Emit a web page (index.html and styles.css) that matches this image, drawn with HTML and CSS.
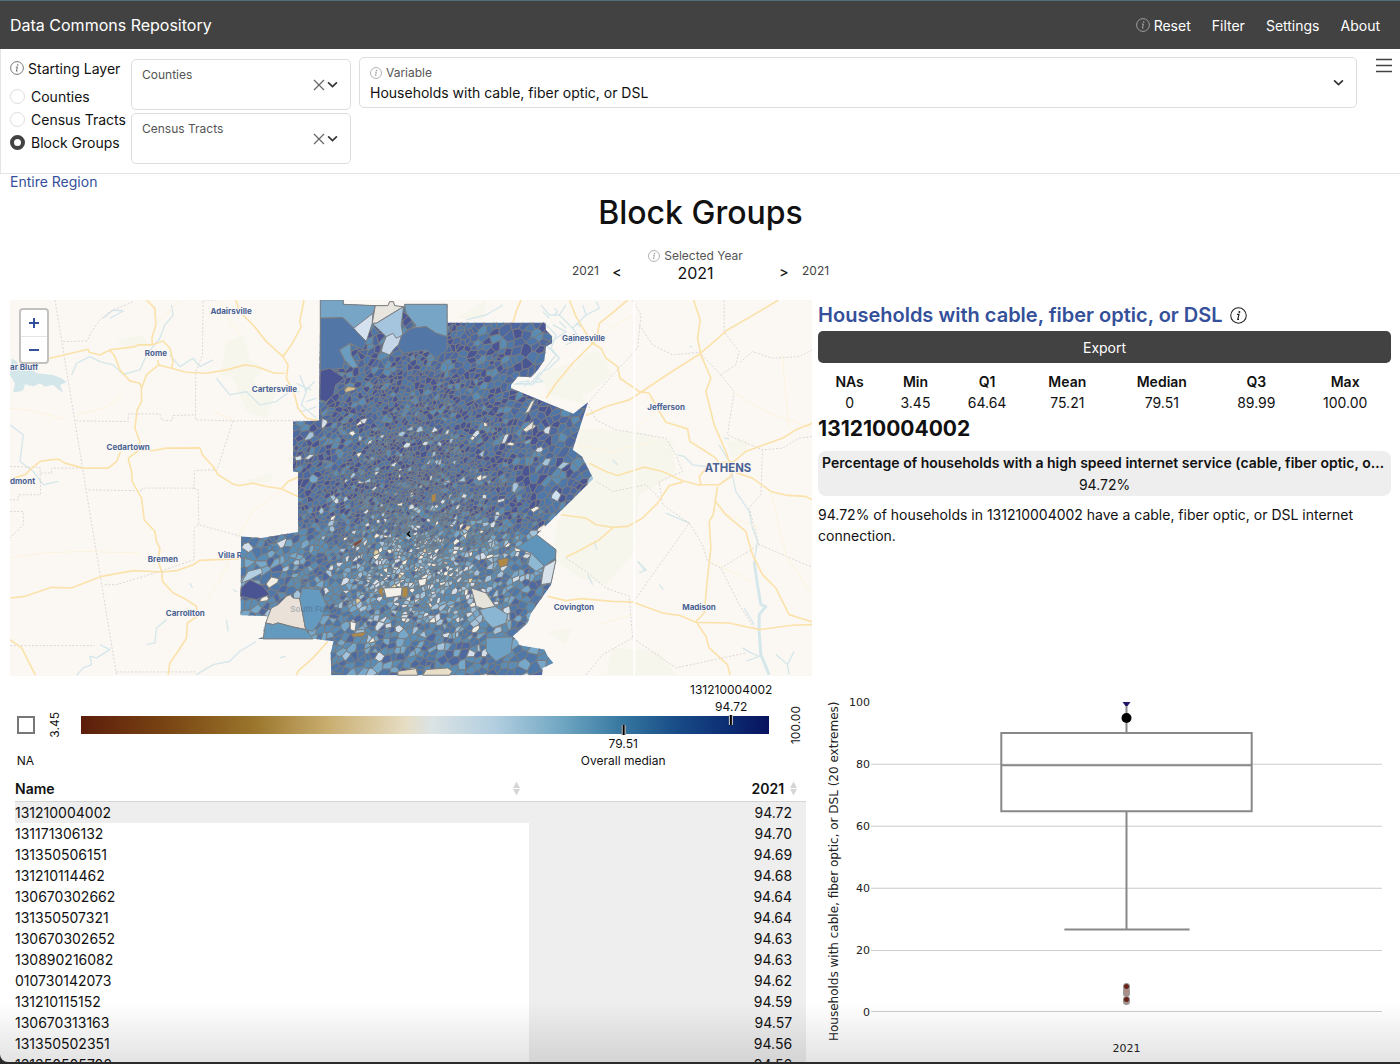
FILE: index.html
```html
<!DOCTYPE html>
<html lang="en">
<head>
<meta charset="utf-8">
<title>Data Commons Repository</title>
<link rel="stylesheet" href="styles.css">
</head>
<body>
<svg class="defs" width="0" height="0" aria-hidden="true">
  <symbol id="info" viewBox="0 0 16 16"><circle cx="8" cy="8" r="7.3" fill="none" stroke="currentColor"/><circle cx="8.8" cy="4.6" r=".95" fill="currentColor"/><path d="M6.6 6.9h1.9L7.3 11.6h1.2" fill="none" stroke="currentColor" stroke-width="1.1"/></symbol>
  <symbol id="chevron" viewBox="0 0 10 10"><path d="M1 3l4 4 4-4" fill="none" stroke="currentColor" stroke-width="1.5"/></symbol>
  <symbol id="cross" viewBox="0 0 12 12"><path d="M1 1l10 10M11 1L1 11" fill="none" stroke="currentColor" stroke-width="1.2"/></symbol>
  <symbol id="sorter" viewBox="0 0 8 16"><path d="M4 0l4 7.500H0zM4 16l4-7.500H0z" fill="#d6d6d6"/></symbol>
</svg>
<div class="window">
  <header class="topbar">
    <h1 class="brand">Data Commons Repository</h1>
    <nav class="menu">
      <button type="button"><svg class="icon dim"><use href="#info"/></svg>Reset</button>
      <button type="button">Filter</button>
      <button type="button">Settings</button>
      <button type="button">About</button>
    </nav>
  </header>

  <section class="controls">
    <fieldset class="layers">
      <legend><svg class="icon"><use href="#info"/></svg>Starting Layer</legend>
      <label><input type="radio" name="layer">Counties</label>
      <label><input type="radio" name="layer">Census Tracts</label>
      <label><input type="radio" name="layer" checked>Block Groups</label>
    </fieldset>
    <div class="places">
      <div class="field">
        <div class="field-text"><label for="county">Counties</label><select id="county"><option></option></select></div>
        <button type="button" aria-label="Clear counties"><svg class="cross"><use href="#cross"/></svg></button>
        <svg class="chevron"><use href="#chevron"/></svg>
      </div>
      <div class="field">
        <div class="field-text"><label for="tract">Census Tracts</label><select id="tract"><option></option></select></div>
        <button type="button" aria-label="Clear census tracts"><svg class="cross"><use href="#cross"/></svg></button>
        <svg class="chevron"><use href="#chevron"/></svg>
      </div>
    </div>
    <div class="field variable">
      <div class="field-text"><label for="variable"><svg class="icon small"><use href="#info"/></svg>Variable</label><select id="variable"><option>Households with cable, fiber optic, or DSL</option></select></div>
      <svg class="chevron"><use href="#chevron"/></svg>
    </div>
    <button class="burger" type="button" aria-label="Menu"><svg viewBox="0 0 16 16"><path d="M0 1.500h16M0 7.500h16M0 13.500h16" stroke="#424242" stroke-width="1.6"/></svg></button>
  </section>

  <main class="page">
    <a class="crumb" href="#region">Entire Region</a>
    <h2 class="title">Block Groups</h2>
    <div class="years">
      <span class="bound">2021</span>
      <button type="button" aria-label="Previous year">&lt;</button>
      <div class="year">
        <label for="year"><svg class="icon small"><use href="#info"/></svg>Selected Year</label>
        <input id="year" type="text" value="2021">
      </div>
      <button type="button" aria-label="Next year">&gt;</button>
      <span class="bound">2021</span>
    </div>

    <div class="grid">
      <div class="map">
        <svg class="map-art" viewBox="0 0 2409 1128" preserveAspectRatio="xMidYMid slice">
          <g transform="translate(-30 -15)">
            <g class="park"><path d="M680 140L730 120 750 190 790 220 760 260 830 290 800 370 740 350 700 250 660 240ZM350 135L430 120 450 150 380 165ZM860 490L895 480V510L870 505ZM740 555L820 535 815 560 750 565Z"/></g>
            <path class="lake" d="M35 190L50 200 60 220 85 215 110 235 160 240 185 250 200 262 180 270 190 295 160 270 135 275 120 265 100 275 75 268 70 285 60 290 40 292 45 265 30 240Z"/>
            <g class="water"><path d="M215 240L230 205 270 185 300 200 340 210 370 238 420 225 440 180 480 130 495 90 520 60 515 30M510 180L540 215 580 190 600 215 640 195M650 250L690 300 740 290 780 330 830 320 870 290 900 290M30 390L70 420 60 500 100 530 130 570 175 560M500 975L470 1000 465 1045 440 1050M770 1040L720 1070 690 1100 640 1110 590 1140M300 1050L330 1065 290 1090 270 1085 275 1110 250 1120 230 1142M310 70L340 45 370 48 330 70M680 975L685 1010M570 865L578 880M700 885L712 892M840 1090L858 1085M900 240L920 290 905 330 950 370M915 290L945 260M920 320L950 310M900 350L925 345M890 265L910 275 935 285M925 345L950 335"/></g>
            <g class="border"><path d="M165 15L350 1142M190 140L262 138 275 110 300 75 330 50 400 20M650 15H610L608 180 588 230 587 375 700 378 955 377M228 378L385 380V357H480L485 375 515 378 520 362 587 360M700 378L652 525 584 527 583 580 595 585 597 690 725 725M583 580H428V588L262 585M595 690L583 700V795L480 830 350 870H308M30 1053H285M350 1132H590M30 515L120 518 122 600H55V615H30M122 535H155V520H250M30 650H70V690L30 730"/></g>
            <g class="minor"><path d="M30 340L100 348 200 375M230 360L310 340 370 300M660 15L690 80 720 120M640 350L700 375M30 790L130 775 250 770 420 775M690 790L660 860 610 930M710 730L760 650 850 585M540 15L510 50 470 80"/></g>
            <g class="road"><path d="M440 15L465 40 468 90 456 130 458 150 415 150 405 155 330 165 300 180 268 172 265 163 150 190 30 215M456 150L490 138 510 160 520 200 515 220 476 210 474 195M476 210L440 240 425 280V320L412 345 405 400 420 440 412 470 385 490 395 530 397 560 425 610 433 675 465 710 470 740 480 760 475 800 486 832 488 860 520 895 555 912 590 935 592 965 563 985 560 1030 535 1070 510 1105 505 1142M330 165L345 185 360 225 390 258 420 265 425 280M515 220L560 232 620 235 680 225 735 210 770 215 825 235H855M708 15L720 50 760 90 800 140 850 185 865 210 860 250 885 300 895 340 920 370 957 378M913 15L900 80 905 95 875 150 850 185M412 465L460 467 500 460 600 459 608 480 640 515 655 540 700 568 720 572 760 565 800 575 845 582 895 605M845 582L865 560 895 547M362 470L350 500 325 520H250L195 505 175 493 150 495 120 500 90 525 75 540 40 550M30 910L75 905 155 878 215 880 305 845 400 828 486 832 530 828 580 810 600 797 720 792M30 1035L65 1060 100 1130 107 1142M985 1040L940 1090 895 1130 890 1142"/></g>
          </g>
          <g transform="translate(1170 -15)">
            <g class="park"><path d="M540 400L720 410 820 440 830 540 720 600 700 780 620 870 540 850 460 790 470 700 520 560ZM540 180L600 170 640 240 560 300 520 250ZM170 70L260 15 250 75ZM640 1060L780 1070 830 1142H620ZM980 440L1050 430 1040 470 1000 490ZM420 240L520 200 560 330 450 300ZM440 1010L520 1000 500 1050Z"/></g>
            <g class="water"><path d="M425 30L450 60 480 60 520 100 560 60 600 40 590 20M460 90L500 110 440 150 470 180 430 230 400 270 350 265M480 60L500 30M520 100L540 130 500 150M560 60L550 30M200 75L260 60 310 30M870 155H880M715 800L740 830M780 870L792 885M565 840L580 870M585 740L592 765M835 480L855 485 880 510 920 515M640 495L655 510M800 655L870 685M1035 940L1065 990M975 430L990 432M440 90L470 120 455 160 480 190 450 220 420 235 395 265 345 268M480 80L500 100M430 50L450 70M440 120L460 125M410 245L430 260 400 262M375 275L390 258 360 262M465 40L475 50 460 62M530 85L545 95"/><path d="M960 450L990 500 1010 590 1050 650 1060 700 1075 740 1065 800M1030 1060L1055 1075 1080 1085 1040 1100M1130 1080L1165 1110 1185 1070M1165 1110L1170 1140M715 800L740 825 720 835"/><path class="wide" d="M1065 800L1075 870 1085 930 1100 935 1080 960 1080 1010 1085 1080 1110 1140"/></g>
            <g class="border"><path d="M975 15V110L1020 170 1010 210 965 240 1005 290 985 420 1030 440 1090 465 1150 460 1200 430 1240 425M1240 165L1200 185 1120 190 1060 170 1020 205M700 15L725 60 715 160 640 240 565 325 590 375 650 405 800 430 830 480 850 530 780 560 790 630 870 685 700 925M870 685L910 750 925 800 965 820 1020 930 1065 1000 1080 1005M965 820L1080 750 1240 818M500 790L560 830 620 880 690 905 700 1030 830 1120 1040 1075M590 560L640 590 740 570 780 610M720 90L760 150 820 180 900 172 965 240M700 1030L610 1080 560 1142M1080 750L1050 640 1085 600 1090 465"/></g>
            <g class="minor"><path d="M1150 180L1160 300 1170 400M710 400L780 340 740 300M1000 290L1100 350 1240 400M600 990L700 960M940 640L1080 700M1115 590L1160 780 1240 900M530 450L640 470 760 440M930 800L1060 860M600 120L700 60"/></g>
            <g class="road"><path d="M685 15L650 45 600 85 592 135 575 150 520 205 470 265 440 310M510 15L530 65 560 115 580 145 605 160 620 190 655 215 662 250 720 290 750 295 780 350 800 382 865 402 872 440 920 470 950 490 960 505M1138 15L1080 50 985 105 900 178 810 235 725 292 690 315 620 335 560 362M883 15L903 75 895 130 905 180 935 250 920 290 945 390 980 470 990 500M1240 385L1190 405 1150 430 1080 455 1040 470 1005 500M960 505L1005 500 995 545 960 570H905L900 545 930 510ZM570 505L620 530 655 542 735 517 790 530 850 558 905 572M850 562L810 572 775 625 730 670 685 695 640 698 590 690 560 670 485 660M640 700L600 735 545 765 500 787M1000 530L1060 550 1115 590 1165 602 1220 605 1240 615M955 575L942 660 930 680 935 760 925 850 915 955 890 980M945 615L980 660 1040 710 1060 780 1090 840 1130 880 1170 960 1240 982M445 905L500 918 545 912 640 920 700 922 790 955 840 962 890 983 990 985 1080 1005 1180 992 1240 990M890 980L920 1025 930 1060 985 1110 993 1142M365 15L350 50 340 85"/></g>
            <path class="seam" d="M705 15V1142"/>
          </g>
          <g class="towns">
            <text x="602" y="42">Adairsville</text><text x="405" y="168">Rome</text><text x="0" y="210">ar Bluff</text>
            <text x="726" y="275">Cartersville</text><text x="290" y="452">Cedartown</text><text x="0" y="553">dmont</text>
            <text x="414" y="787">Bremen</text><text x="624" y="775">Villa Rica</text><text x="468" y="950">Carrollton</text>
            <text x="1658" y="122">Gainesville</text><text x="1914" y="331">Jefferson</text><text class="city" x="2087" y="517">ATHENS</text>
            <text x="1633" y="932">Covington</text><text x="2019" y="932">Madison</text>
          </g>
          <g transform="translate(660 -15)">
            <clipPath id="metro"><path d="M272 15H341V28L475 32 480 20H492L495 32 525 35V28H653V83H948L950 105 968 125 968 145 950 155 945 195 925 225 905 247 865 245 845 270V280L1032 357 1076 322 1030 465 1058 485 1092 552 922 720 980 765V795L965 870 905 955 895 985 850 1025 865 1040 870 1052 945 1065 955 1085 972 1105 940 1120 938 1142H305L303 1075 312 1040 258 1033H84L105 1025 100 1000 122 965 32 962 34 725 95 730 205 712V532L190 530V380L268 378Z"/></clipPath>
            <g id="blocks" clip-path="url(#metro)"></g>
            <g class="area">
              <path fill="#76a5c6" d="M272 15H341V28L437 32 430 60 372 100 340 68 272 70Z"/>
              <path fill="#e8e4de" d="M437 32L475 32 480 20H492L495 32 522 35 440 85 428 85Z"/>
              <path fill="#a5c5de" d="M522 35L515 90 520 120 500 135 470 125 428 85 440 85Z"/>
              <path fill="#d5e1ee" d="M372 100L430 55 428 85 410 140 395 125Z"/>
              <path fill="#76a5c6" d="M525 28H653V125L620 115 590 95 545 100 560 92 530 55Z"/>
              <path fill="#c4d6e8" d="M470 125L490 115 500 130 516 122 512 145 495 160 480 180 455 170 460 150Z"/>
              <path fill="#5276a6" d="M272 70L340 68 372 100 395 125 410 140 400 165 362 145 330 165 345 195 340 220 272 228Z"/>
              <path fill="#5276a6" d="M545 100L590 95 620 115 653 125V165L620 190 590 165 520 175 505 155 516 122Z"/>
              <path fill="#4a5492" d="M272 228L300 220 345 250 318 270 312 300 290 320 270 315Z"/>
              <path fill="#6c9cc0" d="M330 165L362 145 365 180 385 215 370 220 345 195Z"/>
              <path fill="#d8bf8b" d="M345 285L355 275 380 278 375 285 348 293Z"/>
              <path fill="#eae2d8" d="M170 905L182 900 190 910 210 912 218 950 228 1005 190 997 145 985 130 990 108 985 125 940 145 930Z"/>
              <path fill="#659abf" d="M108 985L130 990 145 985 190 997 228 1005 250 1033H100Z"/>
              <path fill="#649abf" d="M218 880L270 885 290 930 275 975 250 1010 228 1005 210 912Z"/>
              <path fill="#4a5492" d="M34 880L60 855 100 875 120 900 80 915 32 905Z"/>
              <path fill="#b3cfe3" d="M34 865L55 830 95 820 98 835 60 855Z"/>
              <path fill="#f4f1ea" d="M462 880L518 878 515 903 470 910ZM565 855L592 850 588 870 570 875ZM362 980L380 985 376 1010 362 1005Z"/>
              <path fill="#b08a45" d="M518 878H535V905L518 910ZM448 880H460V908L448 895ZM805 795L838 790 832 812 810 818ZM605 600L620 597 618 620 606 622ZM365 1018L410 1012 400 1025 370 1027Z"/>
              <path fill="#e6e3da" d="M725 880L770 895 797 935 770 945 740 935Z"/>
              <path fill="#5f94bb" d="M922 720L980 765 978 790 945 815 905 775 860 760Z"/>
              <path fill="#8fb8d5" d="M905 775L945 815 920 830 895 810Z"/>
              <path fill="#d7e1ea" d="M945 815L980 795 965 865 935 870 940 835Z"/>
              <path fill="#8ab5d3" d="M750 945L797 935 835 960 830 985 790 1000 765 975Z"/>
              <path fill="#6ea1c4" d="M770 1030L850 1027 845 1075 800 1100 770 1070Z"/>
              <path fill="#e8e4de" d="M905 320L918 312 900 350 885 358ZM880 405L912 378 910 400 890 412Z"/>
              <path fill="#7d4a42" d="M368 748L400 730 395 742 378 755Z"/>
              <path fill="#cfe0ee" d="M968 600L980 585 995 600 985 620 965 610Z"/>
              <path fill="#e9dfc9" d="M590 1125L655 1120 668 1130 660 1142H580ZM505 1130L560 1122 565 1142H505Z"/>
            </g>
            <path d="M531 718L541 708V714L537 717 544 725 540 727Z"/>
            <text class="faint" x="182" y="953">South Fulton</text><text class="faint" x="112" y="770">Do</text>
          </g>
        </svg>
        <div class="zoom"><button type="button" aria-label="Zoom in"><svg viewBox="0 0 12 12"><path d="M6 1v10M1 6h10"/></svg></button><button type="button" aria-label="Zoom out"><svg viewBox="0 0 12 12"><path d="M1 6h10"/></svg></button></div>
      </div>

      <section class="summary">
        <h3 class="measure"><a href="#measure">Households with cable, fiber optic, or DSL</a><svg class="icon big"><use href="#info"/></svg></h3>
        <button class="export" type="button">Export</button>
        <table class="stats">
          <colgroup><col class="c1"><col class="c2"><col class="c3"><col class="c4"><col class="c5"><col class="c4"><col></colgroup>
          <thead><tr><th>NAs</th><th>Min</th><th>Q1</th><th>Mean</th><th>Median</th><th>Q3</th><th>Max</th></tr></thead>
          <tbody><tr><td>0</td><td>3.45</td><td>64.64</td><td>75.21</td><td>79.51</td><td>89.99</td><td>100.00</td></tr></tbody>
        </table>
        <h3 class="place">131210004002</h3>
        <div class="highlight"><strong>Percentage of households with a high speed internet service (cable, fiber optic, or DSL)</strong><span>94.72%</span></div>
        <p class="sentence">94.72% of households in 131210004002 have a cable, fiber optic, or DSL internet connection.</p>
      </section>

      <div class="lower">
        <div class="scale">
          <div class="na"><span class="swatch"></span><span>NA</span></div>
          <span class="limit">3.45</span>
          <div class="bar">
            <div class="mark above" style="left:94.5%"><span>131210004002</span><span>94.72</span><i></i></div>
            <div class="mark below" style="left:78.8%"><i></i><span>79.51</span><span>Overall median</span></div>
          </div>
          <span class="limit">100.00</span>
        </div>
        <table class="values">
          <thead><tr><th><button type="button">Name<svg class="sorter"><use href="#sorter"/></svg></button></th><th><button class="end" type="button">2021<svg class="sorter"><use href="#sorter"/></svg></button></th></tr></thead>
          <tbody>
            <tr class="current"><td>131210004002</td><td>94.72</td></tr>
            <tr><td>131171306132</td><td>94.70</td></tr>
            <tr><td>131350506151</td><td>94.69</td></tr>
            <tr><td>131210114462</td><td>94.68</td></tr>
            <tr><td>130670302662</td><td>94.64</td></tr>
            <tr><td>131350507321</td><td>94.64</td></tr>
            <tr><td>130670302652</td><td>94.63</td></tr>
            <tr><td>130890216082</td><td>94.63</td></tr>
            <tr><td>010730142073</td><td>94.62</td></tr>
            <tr><td>131210115152</td><td>94.59</td></tr>
            <tr><td>130670313163</td><td>94.57</td></tr>
            <tr><td>131350502351</td><td>94.56</td></tr>
            <tr><td>131350505702</td><td>94.56</td></tr>
          </tbody>
        </table>
      </div>

      <svg class="chart" viewBox="0 0 572 386" role="img" aria-label="Box plot of households with cable, fiber optic, or DSL">
        <path class="lines" d="M53 88H563M53 150H563M53 212H563M53 274H563M53 335H563"/>
        <path class="box" d="M183 57H433V135H183ZM308 26V57M308 135V253M246 253H371"/>
        <path class="median" d="M183 89H433"/>
        <path d="M304 26H312L309 30H307Z" fill="#1c1663"/>
        <circle cx="308" cy="42" r="5"/>
        <g class="outliers"><circle cx="308" cy="325" r="3"/><circle cx="308" cy="317" r="3"/><circle cx="308" cy="314" r="3"/><circle class="deep" cx="308" cy="310" r="3"/><circle class="deep" cx="308" cy="323" r="3"/></g>
        <g class="ticks"><text x="52" y="30">100</text><text x="52" y="92">80</text><text x="52" y="154">60</text><text x="52" y="216">40</text><text x="52" y="278">20</text><text x="52" y="339">0</text></g>
        <text class="mid" x="308" y="375">2021</text>
        <text class="mid axis" transform="translate(20 195) rotate(-90)">Households with cable, fiber optic, or DSL (20 extremes)</text>
      </svg>
    </div>
  </main>
  <div class="shade"></div>
</div>
<script src="map.js"></script>
</body>
</html>
```
FILE: styles.css
```css
* { box-sizing: border-box; }
body { margin: 0; background: #2b2b2b; color: #111; font: 14px/21px Inter, "Liberation Sans", sans-serif; }
h1, h2, h3, p, fieldset { margin: 0; padding: 0; border: 0; }
button, select, input { font: inherit; color: inherit; background: none; border: 0; padding: 0; margin: 0; }
a { color: #34509a; text-decoration: none; }
.defs { display: block; }
.window { position: relative; height: calc(100vh - 2px); overflow: hidden; background: #fff; border-radius: 0 0 0 8px; }
.shade { position: absolute; inset: auto 0 0; height: 60px; background: linear-gradient(transparent, rgba(0, 0, 0, .11)); pointer-events: none; }

.icon { width: 14px; height: 14px; margin-right: 4px; color: #666; flex: none; }
.icon.small { width: 12px; height: 12px; color: #999; }
.icon.big { width: 17px; height: 17px; margin: 0 0 0 7px; color: #222; }
.icon.dim { color: #aaa; }

.topbar { display: flex; justify-content: space-between; align-items: center; height: 49px; padding: 0 20px 0 10px; background: #424242; border-top: 1px solid #4d7178; color: #fff; }
.brand { font-size: 16px; font-weight: 400; }
.menu { display: flex; gap: 21px; }
.menu button { display: flex; align-items: center; }

.controls { display: flex; align-items: flex-start; height: 125px; padding: 8px 8px 0 9px; border-bottom: 1px solid #e4e4e4; border-left: 1px solid #e4e4e4; }
.layers { width: 121px; flex: none; }
.layers legend { display: flex; align-items: center; padding: 0; height: 22px; margin-bottom: 6px; }
.layers label { display: flex; align-items: center; gap: 6px; height: 23px; white-space: nowrap; }
.layers input { appearance: none; width: 15px; height: 15px; border: 1px solid #ddd; border-radius: 50%; }
.layers input:checked { border: 4px solid #424242; }
.places { display: grid; gap: 3px; width: 220px; margin: 2px 8px 0 0; }
.field { display: flex; align-items: center; height: 51px; padding: 0 12px 0 10px; border: 1px solid #ddd; border-radius: 5px; }
.field-text { flex: 1; min-width: 0; }
.field label { display: flex; align-items: center; font-size: 12px; line-height: 18px; color: #555; }
.field select { display: block; appearance: none; width: 100%; height: 20px; }
.field button { display: flex; margin-right: 2px; color: #666; }
.cross { width: 12px; height: 12px; }
.chevron { width: 11px; height: 11px; color: #333; }
.variable { flex: 1; margin-right: 19px; }
.burger { width: 16px; height: 16px; margin-top: 1px; }
.burger svg { display: block; }

.page { padding: 0 9px 0 10px; }
.crumb { display: block; line-height: 15px; }
.title { margin-top: 3px; font-size: 32px; line-height: 42px; font-weight: 500; text-align: center; }
.years { display: flex; justify-content: center; align-items: flex-end; height: 51px; gap: 12px; padding-bottom: 1px; }
.years > button { font-weight: 500; width: 12px; height: 26px; }
.bound { font-size: 12px; line-height: 26px; color: #444; }
.year { width: 131px; padding-right: 10px; }
.year label { display: flex; align-items: center; justify-content: center; font-size: 12px; line-height: 14px; color: #555; }
.year input { display: block; width: 100%; height: 21px; font-size: 16px; text-align: center; }

.grid { display: grid; grid-template-columns: 7fr 5fr; column-gap: 6px; margin-top: 15px; }
.map { position: relative; background: #fbf8f4; }
.map-art { display: block; width: 100%; }
.park { fill: #f7f6ed; }
.lake { fill: #d3e6e9; }
.water { fill: none; stroke: #d5e7ea; stroke-width: 4; stroke-linejoin: round; }
.water .wide { stroke-width: 9; }
.border { fill: none; stroke: #dcd6d5; stroke-width: 3; stroke-dasharray: 6 5; }
.minor { fill: none; stroke: #fdf3dd; stroke-width: 3; }
.road { fill: none; stroke: #fbe2ab; stroke-width: 5; stroke-linejoin: round; }
.seam { stroke: #fff; stroke-width: 5; }
.towns { font-size: 24px; font-weight: 700; fill: #4a6393; stroke: #fbf8f4; stroke-width: 5; paint-order: stroke; }
.towns .city { font-size: 34px; }
.faint { font-size: 24px; font-weight: 600; fill: #46567a; opacity: .35; }
#blocks { stroke: #7a7b7d; stroke-width: 3; stroke-linejoin: round; }
.area { stroke: #7b7d80; stroke-width: 3; }
.zoom { position: absolute; left: 9px; top: 8px; width: 30px; border: 2px solid #c4c2c0; border-radius: 4px; background: #fff; }
.zoom button { display: grid; place-items: center; width: 100%; height: 26px; }
.zoom button + button { border-top: 1px solid #e4e4e4; }
.zoom svg { width: 12px; height: 12px; stroke: #34509a; stroke-width: 2; }

.summary { display: flex; flex-direction: column; min-width: 0; }
.measure { display: flex; align-items: center; margin-bottom: 1px; font-size: 20px; line-height: 30px; font-weight: 600; }
.export { height: 32px; border-radius: 5px; background: #424242; color: #fff; }
.stats { width: 100%; margin-top: 8px; border-collapse: collapse; table-layout: fixed; text-align: center; }
.stats th, .stats td { padding: 0; height: 21px; font-weight: 400; }
.stats th { font-weight: 600; }
.c1 { width: 11%; }
.c2 { width: 12%; }
.c3 { width: 13%; }
.c4 { width: 15%; }
.c5 { width: 18%; }
.place { margin-top: 2px; font-size: 21px; line-height: 28px; font-weight: 700; }
.highlight { display: grid; justify-items: center; height: 45px; margin-top: 8px; padding: 0 4px; border-radius: 8px; background: #eee; line-height: 23px; }
.highlight strong { max-width: 100%; overflow: hidden; text-overflow: ellipsis; white-space: nowrap; font-weight: 600; }
.sentence { margin-top: 8px; }

.lower { padding: 0 6px 0 5px; min-width: 0; }
.scale { display: flex; align-items: center; height: 98px; padding-right: 2px; font-size: 12px; line-height: 17px; }
.na { display: grid; gap: 18px; justify-items: center; width: 21px; margin-top: 35px; }
.swatch { width: 18px; height: 18px; border: 2px solid #777; }
.limit { writing-mode: vertical-rl; transform: rotate(180deg); text-align: center; width: 17px; }
.limit:nth-of-type(1) { margin-left: 10px; }
.bar { position: relative; flex: 1; height: 18px; margin: 0 18px; background: linear-gradient(90deg, #5c1d0b, #784312 12%, #9a752b 25%, #c9ae70 36%, #e6dcc2 47%, #dbe3e4 51%, #b3cfe0 60%, #6fa6c2 70%, #34759f 79%, #174a86 87%, #0c2d73 94%, #09125f); }
.mark { position: absolute; display: flex; flex-direction: column; align-items: center; transform: translateX(-50%); white-space: nowrap; }
.mark i { width: 4px; height: 10px; background: #000; border: solid #ddd; border-width: 0 1px; }
.above { bottom: 9px; }
.below { top: 9px; }
.values { width: 100%; margin-top: 4px; border-collapse: collapse; table-layout: fixed; }
.values th { padding: 0 9px 2px 0; height: 24px; border-bottom: 1px solid #d4d4d4; }
.values th:first-child { width: 65%; }
.values th button { display: flex; width: 100%; justify-content: space-between; align-items: center; font-weight: 600; }
.values th .end { justify-content: flex-end; gap: 6px; }
.sorter { width: 7px; height: 15px; }
.values td { padding: 0; height: 21px; }
.values td + td { padding-right: 14px; text-align: right; }
.values td + td, .current { background: #eee; }

.chart { display: block; width: 100%; font-family: "DejaVu Sans", Verdana, sans-serif; font-size: 11px; fill: #222; }
.lines { fill: none; stroke: #ccc; }
.box { fill: none; stroke: #888; stroke-width: 2; }
.median { stroke: #888; stroke-width: 2; }
.chart circle { fill: #000; }
.outliers circle { fill: #b08a80; stroke: #999; }
.outliers .deep { fill: #6b2318; }
.ticks { text-anchor: end; }
.mid { text-anchor: middle; }
.axis { font-size: 12px; }
```
FILE: map.js
```js
// Fills the metro outline with block-group cells: a Voronoi mesh that tightens toward downtown.
(function () {
  var seed = 7;
  function rnd() { seed = (seed * 1664525 + 1013904223) % 4294967296; return seed / 4294967296; }
  function dist(x, y) { return Math.hypot(x - 560, (y - 700) * (y < 700 ? 0.62 : 1)); }
  function spacing(x, y) {
    var wave = 1 + 0.25 * Math.sin(x / 37 + 2) * Math.sin(y / 29 + 1);
    return (7 + Math.pow(dist(x, y) / 500, 2) * 28) * wave;
  }

  var size = 40, bins = {}, pts = [];
  function near(x, y, reach) {
    var out = [], cx = Math.floor(x / size), cy = Math.floor(y / size);
    for (var i = -reach; i <= reach; i++) for (var j = -reach; j <= reach; j++) {
      var b = bins[(cx + i) + ',' + (cy + j)];
      if (b) for (var k = 0; k < b.length; k++) out.push(b[k]);
    }
    return out;
  }
  for (var t = 0; t < 22000; t++) {
    var x = 10 + rnd() * 1110, y = rnd() * 1160, s = spacing(x, y) * (0.35 + rnd() * 0.9);
    if (near(x, y, 1).some(function (q) { return Math.hypot(q[0] - x, q[1] - y) < s; })) continue;
    var p = [x, y], key = Math.floor(x / size) + ',' + Math.floor(y / size);
    (bins[key] = bins[key] || []).push(p);
    pts.push(p);
  }

  // Distances are skewed so that cells come out as slanted slivers, not honeycomb.
  function cell(p) {
    var r = 90, poly = [[p[0] - r, p[1] - r], [p[0] + r, p[1] - r], [p[0] + r, p[1] + r], [p[0] - r, p[1] + r]];
    var list = near(p[0], p[1], dist(p[0], p[1]) > 330 ? 3 : 2).filter(function (q) { return q !== p; });
    list.forEach(function (q) { q.d = Math.hypot(q[0] - p[0], q[1] - p[1]); });
    list.sort(function (a, b) { return a.d - b.d; });
    list.slice(0, 40).forEach(function (q) {
      var mx = (p[0] + q[0]) / 2, my = (p[1] + q[1]) / 2, ex = q[0] - p[0], ey = q[1] - p[1];
      var dx = ex + 0.35 * ey, dy = 1.1 * ey + 0.35 * ex, next = [];
      for (var i = 0; i < poly.length; i++) {
        var a = poly[i], b = poly[(i + 1) % poly.length];
        var fa = (a[0] - mx) * dx + (a[1] - my) * dy, fb = (b[0] - mx) * dx + (b[1] - my) * dy;
        if (fa <= 0) next.push(a);
        if ((fa < 0 && fb > 0) || (fa > 0 && fb < 0)) {
          var u = fa / (fa - fb);
          next.push([a[0] + (b[0] - a[0]) * u, a[1] + (b[1] - a[1]) * u]);
        }
      }
      poly = next;
    });
    return poly;
  }

  var colors = ['#b58e4d', '#e2d0a6', '#f1eee6', '#d3e0ec', '#a3c4dc', '#78a8c9', '#5b8cb4', '#4f77a8', '#4e68a0', '#4a5594'];
  function color(x, y) {
    var south = Math.max(0, Math.min(1, (y - 620) / 130));
    var inner = Math.max(0, 1 - Math.hypot((x - 600) / 360, (y - 860) / 230));
    var v = 7.7 - south * 1.1 + (rnd() - 0.5) * 3.2;
    if (rnd() < inner * 1.1) v = 0.8 + Math.sqrt(rnd()) * 5.6;
    else if (y > 370 && rnd() < 0.07) v = 2 + rnd() * 3;
    return colors[Math.max(0, Math.min(9, Math.round(v)))];
  }

  document.getElementById('blocks').innerHTML = pts.map(function (p) {
    var d = cell(p).map(function (v) { return Math.round(v[0]) + ' ' + Math.round(v[1]); }).join('L');
    return '<path fill="' + color(p[0], p[1]) + '" d="M' + d + 'Z"/>';
  }).join('');
})();
```
